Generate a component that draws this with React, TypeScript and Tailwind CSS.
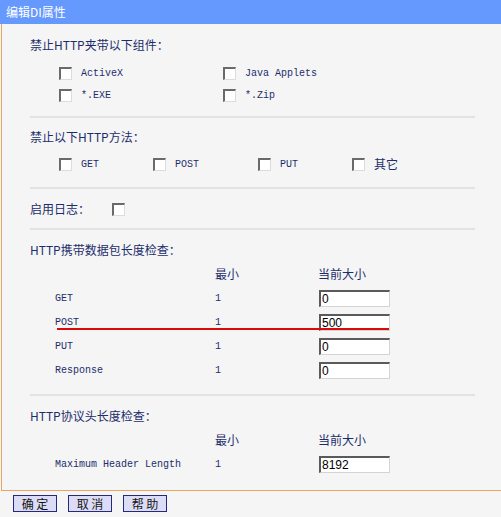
import type { ReactNode } from "react";

const cjk = '"Noto Sans CJK SC", "Liberation Sans", sans-serif';
const mono = '"Liberation Mono", "Noto Sans CJK SC", monospace';

function Box() {
  return (
    <span className="box-border inline-block h-[13px] w-[13px] border-b border-l-2 border-r border-t-2 border-b-[#dcdcdc] border-l-[#6a6a6a] border-r-[#dcdcdc] border-t-[#6a6a6a] bg-white" />
  );
}

function Check({ label, x, cjkLabel }: { label: string; x: number; cjkLabel?: boolean }) {
  return (
    <div className="absolute top-0 flex h-full items-center" style={{ left: x }}>
      <Box />
      <span
        className={cjkLabel ? "ml-[9px] text-[12px]" : "ml-[9px] text-[10px]"}
        style={{ fontFamily: cjkLabel ? cjk : mono }}>
        {label}
      </span>
    </div>
  );
}

function Heading({ children, className = "" }: { children: ReactNode; className?: string }) {
  return (
    <div className={`flex h-[20px] items-center pl-[28px] text-[12px] ${className}`} style={{ fontFamily: cjk }}>
      {children}
    </div>
  );
}

function Sep({ className = "" }: { className?: string }) {
  return <div className={`ml-[28px] h-[2px] w-[445px] bg-[#e2e2e2] ${className}`} />;
}

function Field({ value }: { value: string }) {
  return (
    <div className="box-border flex h-[17px] w-[71px] items-center border-b border-l-2 border-r border-t-2 border-b-[#d4d4d4] border-l-[#5a5a5a] border-r-[#d4d4d4] border-t-[#5a5a5a] bg-white pl-[1px] text-[12px] text-black" style={{ fontFamily: '"Liberation Sans", sans-serif' }}>
      {value}
    </div>
  );
}

function TableHead() {
  return (
    <div className="flex h-[24px] items-center text-[12px]" style={{ fontFamily: cjk }}>
      <span className="ml-[213px] w-[103px]">最小</span>
      <span>当前大小</span>
    </div>
  );
}

function Row({ name, value }: { name: string; value: string }) {
  return (
    <div className="flex h-[24px] items-center text-[10px]" style={{ fontFamily: mono }}>
      <span className="ml-[53px] w-[160px]">{name}</span>
      <span className="w-[104px]">1</span>
      <Field value={value} />
    </div>
  );
}

function Btn({ label }: { label: string }) {
  return (
    <button
      type="button"
      className="box-border flex h-[17px] w-[44px] items-center justify-center border border-[#232a7c] bg-[#dcdcf6] text-[12px] leading-none text-[#151515]"
      style={{ fontFamily: cjk }}>
      {label}
    </button>
  );
}

export default function App() {
  return (
    <div className="relative h-[517px] w-[501px] overflow-hidden bg-[#f5f5f5] text-[#1c2d6b]">
      <div className="flex h-[24px] items-center bg-[#6699fe] pl-[6px] text-[12px] text-white" style={{ fontFamily: cjk }}>
        编辑DI属性
      </div>

      <div className="relative ml-[1px] box-border h-[467px] border-b border-l border-b-[#eba560] border-l-[#eba560] pt-[11px]">
        <Heading>禁止HTTP夹带以下组件：</Heading>
        <div className="relative mt-[7px] h-[22px]">
          <Check label="ActiveX" x={57} />
          <Check label="Java Applets" x={221} />
        </div>
        <div className="relative h-[22px]">
          <Check label="*.EXE" x={57} />
          <Check label="*.Zip" x={221} />
        </div>
        <Sep className="mt-[10px]" />

        <Heading className="mt-[9px]">禁止以下HTTP方法：</Heading>
        <div className="relative mt-[6px] h-[22px]">
          <Check label="GET" x={57} />
          <Check label="POST" x={151} />
          <Check label="PUT" x={256} />
          <Check label="其它" x={350} cjkLabel />
        </div>
        <Sep className="mt-[12px]" />

        <div className="mt-[10px] flex h-[20px] items-center pl-[28px] text-[12px]" style={{ fontFamily: cjk }}>
          <span className="w-[82px]">启用日志：</span>
          <Box />
        </div>
        <Sep className="mt-[9px]" />

        <Heading className="mt-[10px]">HTTP携带数据包长度检查：</Heading>
        <div className="mt-[2px]">
          <TableHead />
          <Row name="GET" value="0" />
          <Row name="POST" value="500" />
          <Row name="PUT" value="0" />
          <Row name="Response" value="0" />
        </div>
        <Sep className="mt-[12px]" />

        <Heading className="mt-[10px]">HTTP协议头长度检查：</Heading>
        <div className="mt-[2px]">
          <TableHead />
          <Row name="Maximum Header Length" value="8192" />
        </div>

        <div className="absolute left-[55px] top-[304px] h-[2px] w-[332px] bg-[#d90a0a]" />
      </div>

      <div className="flex gap-[11px] pl-[13px] pt-[4px]">
        <Btn label="确 定" />
        <Btn label="取 消" />
        <Btn label="帮 助" />
      </div>
    </div>
  );
}
